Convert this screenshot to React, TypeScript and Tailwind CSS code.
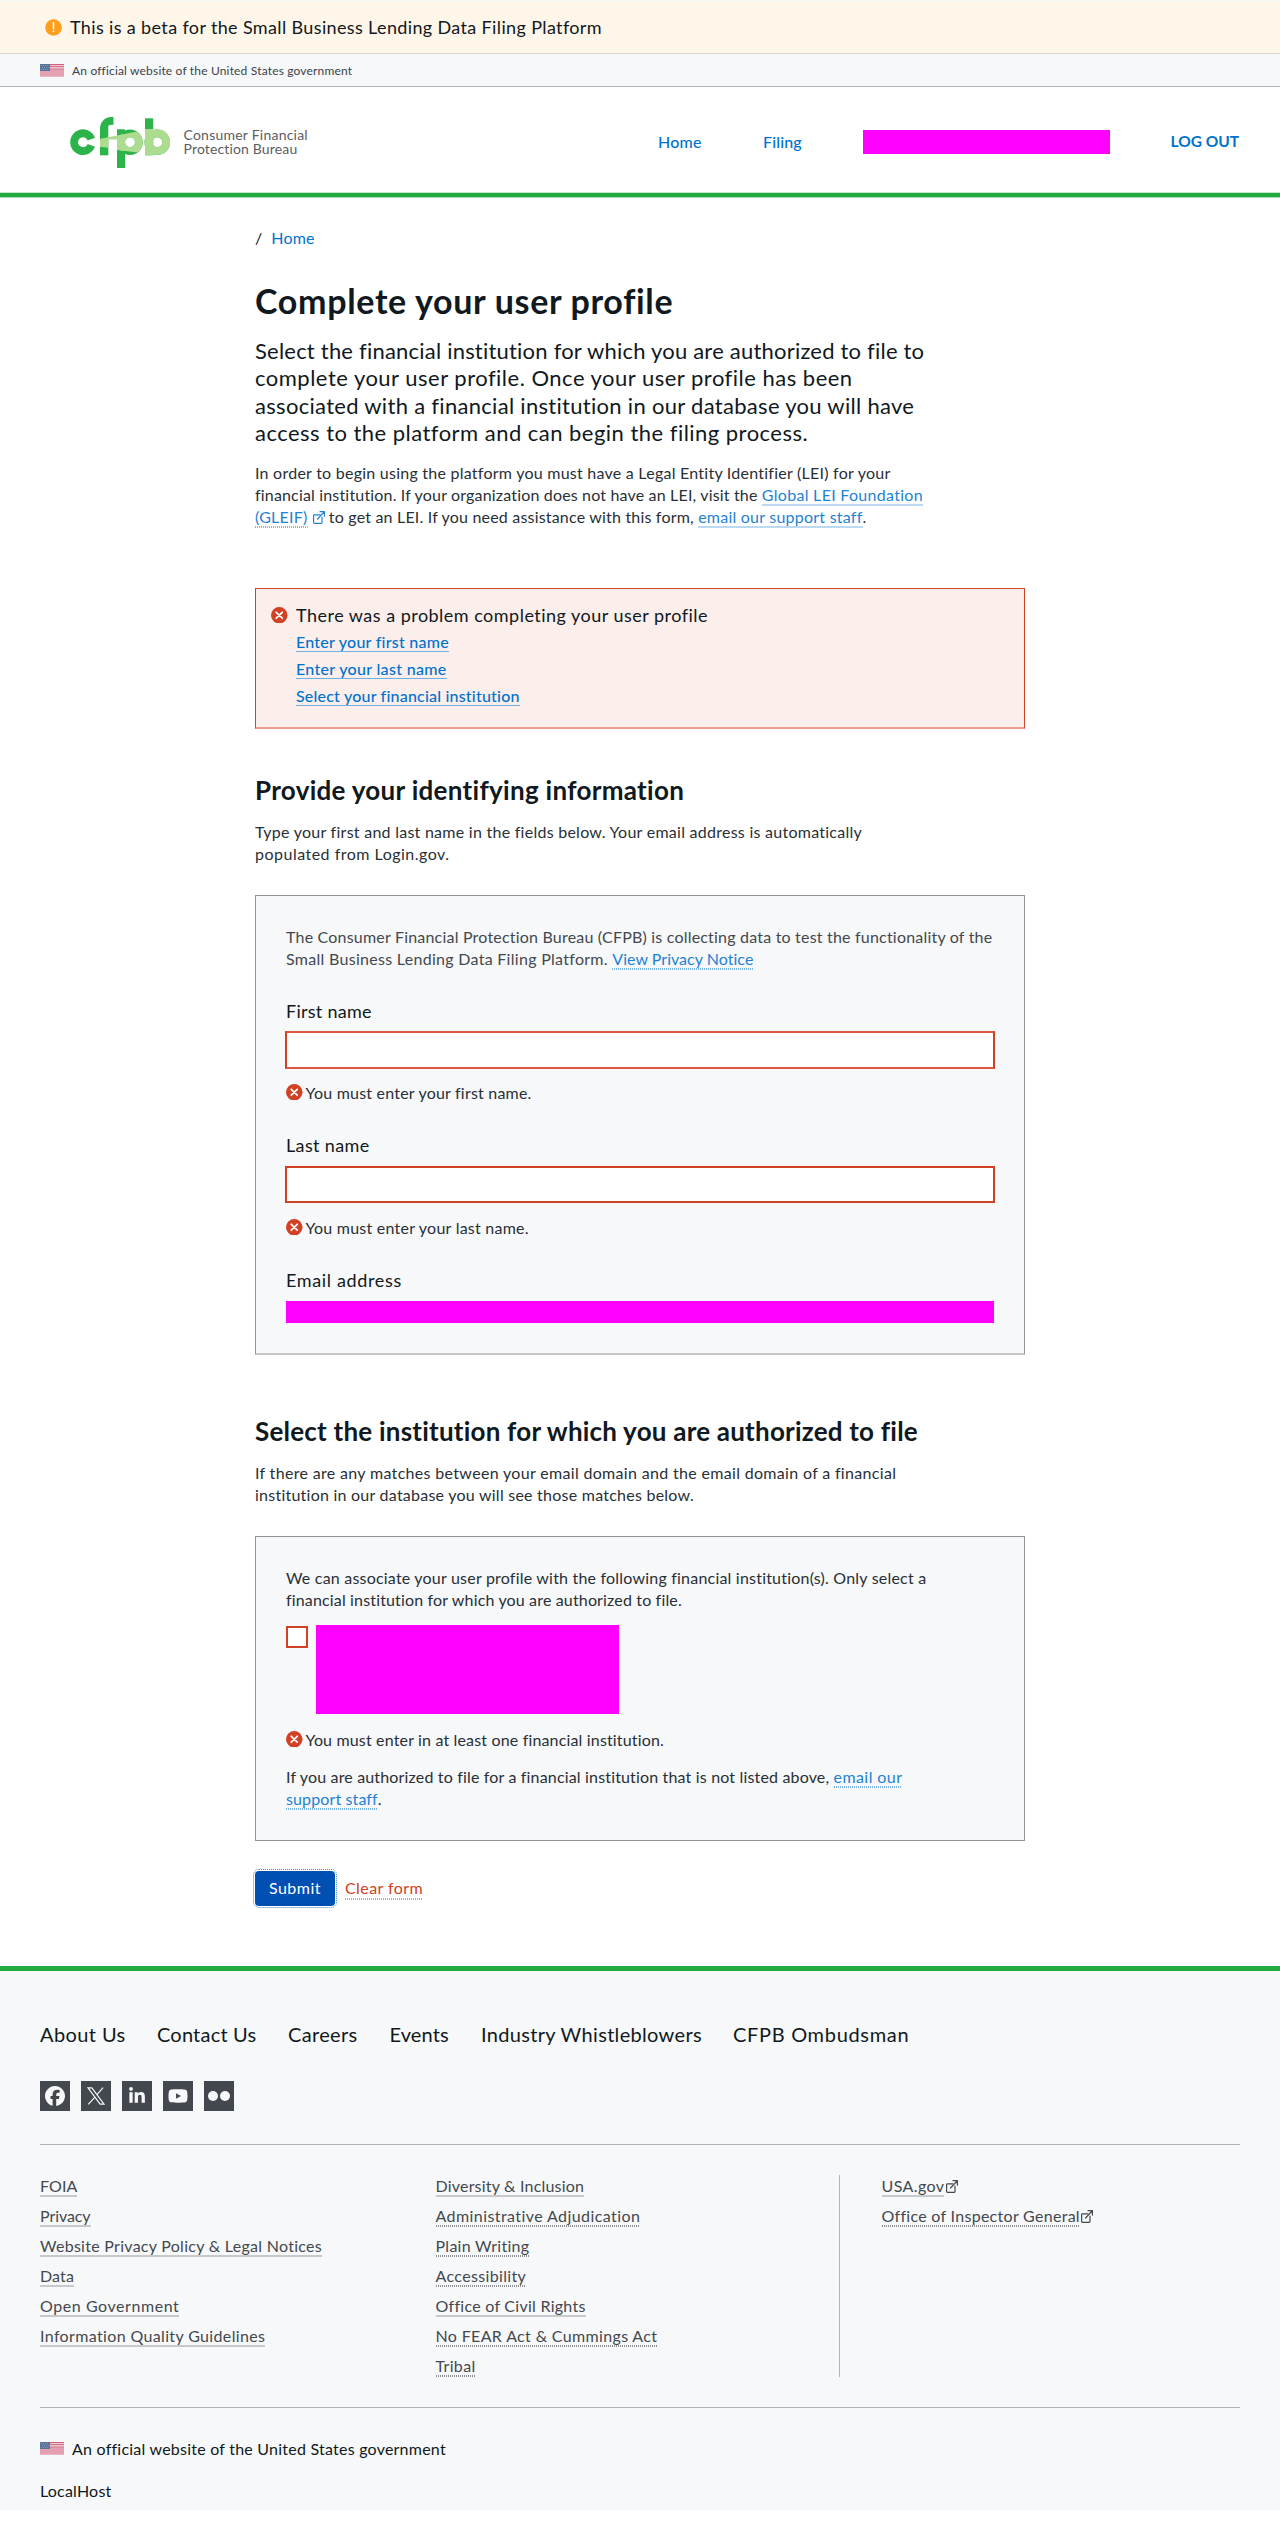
import type { ReactNode } from "react";
import { FaFacebook, FaLinkedinIn, FaYoutube } from "react-icons/fa6";

function ErrorIcon({ className = "" }: { className?: string }) {
  return (
    <svg viewBox="0 0 16 16" className={`h-[16.5px] w-[16.5px] shrink-0 ${className}`}>
      <circle cx="8" cy="8" r="8" fill="#d14124" />
      <path d="M5.1 5.1l5.8 5.8M10.9 5.1l-5.8 5.8" stroke="#fff" strokeWidth="1.7" strokeLinecap="round" />
    </svg>
  );
}

function ExternalIcon({ className = "" }: { className?: string }) {
  return (
    <svg viewBox="0 0 12 13" className={`inline-block h-[13px] w-3 -translate-y-px ${className}`} fill="none" stroke="currentColor" strokeWidth="1.2" strokeLinecap="round" strokeLinejoin="round">
      <path d="M7 3.8H1.4a.8.8 0 0 0-.8.8v7a.8.8 0 0 0 .8.8h6.8a.8.8 0 0 0 .8-.8V6" />
      <path d="M7 .7h4.4v4.4M11.2.9L4.6 8" />
    </svg>
  );
}

function Flag() {
  return (
    <svg viewBox="0 0 24 13" className="h-[13px] w-6 shrink-0" shapeRendering="crispEdges">
      <rect width="24" height="13" fill="#e3a0b1" />
      <rect width="24" height="1" fill="#cf5f7d" />
      <rect y="2" width="24" height="1" fill="#d46f8a" />
      <rect y="1" width="24" height="1" fill="#edc9d2" />
      <rect y="3" width="24" height="1" fill="#ecc2cd" />
      <rect y="5" width="24" height="1" fill="#dc8fa4" />
      <rect y="12" width="24" height="1" fill="#e8b4c1" />
      <rect width="10" height="7" fill="#5a7499" />
      <path d="M1 1.5h8M2 3.5h7M1 5.5h8" stroke="#7f97b5" strokeWidth="1" strokeDasharray="1 1" />
    </svg>
  );
}

function LogoShapes({ band = false }: { band?: boolean }) {
  const color = band ? "#addc91" : "#2cb34a";
  return (
    <g stroke={color} fill="none" strokeWidth="7.8">
      <rect x="34" y="15" width="8.3" height="28.3" fill={color} stroke="none" />
      <rect x="42" y="20.5" width="9.5" height="7" fill={band ? color : "none"} stroke="none" />
      <circle cx="45.3" cy="16.2" r="7.3" strokeDasharray="11.5 100" transform="rotate(180 45.3 16.2)" />
      <rect x="45" y="5" width="2.5" height="7.8" fill={color} stroke="none" />
      <rect x="51" y="17.3" width="8" height="38.7" fill={color} stroke="none" />
      <circle cx="64" cy="30.2" r="8.9" />
      <rect x="79" y="6.3" width="8.2" height="37" fill={color} stroke="none" />
      <circle cx="91.3" cy="30.2" r="8.9" />
    </g>
  );
}

function Logo() {
  return (
    <svg viewBox="0 0 112 60" className="h-[60px] w-[112px] shrink-0" role="img" aria-label="cfpb">
      <defs>
        <clipPath id="band">
          <polygon points="32,27.2 51,23.5 71,19.5 78,17 112,17 112,44 76,44 74,40.7 51,38 51,36.5 32,34.8" />
        </clipPath>
      </defs>
      <circle cx="17" cy="30.2" r="8.9" fill="none" stroke="#2cb34a" strokeWidth="7.8" strokeDasharray="49.2 100" transform="rotate(21 17 30.2)" />
      <LogoShapes />
      <g clipPath="url(#band)">
        <LogoShapes band />
      </g>
    </svg>
  );
}

function SolidLink({ children, className = "" }: { children: ReactNode; className?: string }) {
  return <a href="#" className={`border-b-2 border-[#bcd9f1] text-[#1f82d3] ${className}`}>{children}</a>;
}

function DottedLink({ children, className = "" }: { children: ReactNode; className?: string }) {
  return (
    <a href="#" className={`bg-[repeating-linear-gradient(90deg,#7fb8e6_0_1px,transparent_1px_2px)] bg-[length:100%_2px] bg-bottom bg-no-repeat pb-[2px] text-[#1f82d3] ${className}`}>
      {children}
    </a>
  );
}

function FieldError({ children, className = "" }: { children: string; className?: string }) {
  return (
    <div className={`flex h-[22px] gap-[3px] leading-[22px] ${className}`}>
      <ErrorIcon className="mt-[2px]" />
      <span>{children}</span>
    </div>
  );
}

function Social({ children }: { children: ReactNode }) {
  return <a href="#" className="flex h-[30px] w-[30px] items-center justify-center bg-[#43484e] text-[#f7f8f9]">{children}</a>;
}

function FooterLink({ children, dotted = false, className = "" }: { children: string; dotted?: boolean; className?: string }) {
  const line = dotted
    ? "bg-[repeating-linear-gradient(90deg,#8e9093_0_1px,transparent_1px_2px)] bg-[length:100%_2px] bg-bottom bg-no-repeat pb-[2px]"
    : "border-b-2 border-[#c8c9cb]";
  return <a href="#" className={`${line} ${className}`}>{children}</a>;
}

export default function App() {
  return (
    <div className="min-h-[2521px] w-[1280px] bg-white font-['Lato','Open_Sans',sans-serif] text-[16px] whitespace-nowrap text-[#101820]">
      <div className="h-px bg-[#f7f8f9]" />
      <div className="flex h-[53px] items-center border-b border-[#dbd8d2] bg-[#fff6ea] pl-[45px] text-[18px] leading-6">
        <svg viewBox="0 0 17 17" className="h-[17px] w-[17px]">
          <circle cx="8.5" cy="8.5" r="8.3" fill="#ff9e1b" />
          <path d="M8.5 3.6v6.2" stroke="#fff" strokeWidth="1.5" strokeLinecap="round" />
          <circle cx="8.5" cy="12.6" r="1" fill="#fff" />
        </svg>
        <span className="ml-2 tracking-[0.36px]">This is a beta for the Small Business Lending Data Filing Platform</span>
      </div>
      <div className="flex h-[33px] items-center border-b border-[#b4b5b6] bg-[#f7f8f9] pl-10 text-[12px]">
        <Flag />
        <span className="mt-px ml-2 tracking-[0.17px] text-[#3b4249]">An official website of the United States government</span>
      </div>

      <header className="flex h-[105px] items-center bg-white pt-[5px] pl-[66px] font-medium text-[#0072ce]">
        <Logo />
        <div className="ml-[5.5px] w-[474.5px] text-[14px] leading-[14px] font-normal text-[#5a5d61]">
          <div className="tracking-[0.23px]">Consumer Financial</div>
          <div className="tracking-[0.15px]">Protection Bureau</div>
        </div>
        <a href="#" className="w-[105px] tracking-[0.2px]">Home</a>
        <a href="#" className="w-[100px] tracking-[0.15px]">Filing</a>
        <div className="h-6 w-[247px] bg-[#ff00ff]" />
        <a href="#" className="-mt-px ml-[60.5px] text-[15.5px] font-bold tracking-[0.02px]">LOG OUT</a>
      </header>
      <div className="h-px bg-[#c3e8cb]" />
      <div className="h-1 bg-[#20aa3f]" />
      <div className="h-px bg-[#a5dcb2]" />

      <main className="ml-[255px] w-[770px]">
        <div className="mt-[29px] flex h-[22px] gap-[9px] leading-[22px]">
          <span>/</span>
          <a href="#" className="tracking-[0.2px] text-[#0072ce]">Home</a>
        </div>
        <h1 className="mt-[31px] text-[34px] leading-[42px] font-bold tracking-[0.67px]">Complete your user profile</h1>
        <p className="mt-[15px] text-[22px] leading-[27.4px]">
          <span className="block tracking-[0.21px]">Select the financial institution for which you are authorized to file to</span>
          <span className="block tracking-[0.49px]">complete your user profile. Once your user profile has been</span>
          <span className="block tracking-[0.3px]">associated with a financial institution in our database you will have</span>
          <span className="block tracking-[0.47px]">access to the platform and can begin the filing process.</span>
        </p>
        <p className="mt-[15px] leading-[22px] text-[#282f36]">
          <span className="block tracking-[0.245px]">In order to begin using the platform you must have a Legal Entity Identifier (LEI) for your</span>
          <span className="block">
            <span className="tracking-[0.17px]">financial institution. If your organization does not have an LEI, visit the </span>
            <SolidLink className="tracking-[0.29px]">Global LEI Foundation</SolidLink>
          </span>
          <span className="block">
            <DottedLink className="tracking-[0.24px]">(GLEIF)</DottedLink>
            <ExternalIcon className="ml-[5px] text-[#1f82d3]" />
            <span className="tracking-[0.19px]"> to get an LEI. If you need assistance with this form, </span>
            <SolidLink className="tracking-[0.23px]">email our support staff</SolidLink>.
          </span>
        </p>

        <section className="mt-[60px] flex h-[141px] gap-[8.5px] border border-b-2 border-[#d14124] border-b-[#e99c8c] bg-[#fbeeeb] pt-[15px] pl-[15px] font-medium">
          <ErrorIcon className="mt-[3px]" />
          <div>
            <h4 className="text-[18px] leading-[22px] font-normal tracking-[0.48px]">There was a problem completing your user profile</h4>
            <ul className="mt-[2px] leading-[27px] text-[#0072ce]">
              <li><a href="#" className="border-b border-[#72b0e2] tracking-[0.25px]">Enter your first name</a></li>
              <li><a href="#" className="border-b border-[#72b0e2] tracking-[0.32px]">Enter your last name</a></li>
              <li><a href="#" className="border-b border-[#72b0e2] tracking-[0.2px]">Select your financial institution</a></li>
            </ul>
          </div>
        </section>

        <h2 className="mt-[45px] text-[26px] leading-8 font-bold tracking-[0.3px]">Provide your identifying information</h2>
        <p className="mt-[15px] leading-[22px] text-[#282f36]">
          <span className="block tracking-[0.26px]">Type your first and last name in the fields below. Your email address is automatically</span>
          <span className="block tracking-[0.49px]">populated from Login.gov.</span>
        </p>

        <section className="mt-[30px] h-[460px] border border-b-2 border-[#919395] border-b-[#c4c6c8] bg-[#f7f8f9] pt-[30px] pr-[30px] pl-[30px]">
          <p className="leading-[22px] text-[#43484e]">
            <span className="block tracking-[0.2px]">The Consumer Financial Protection Bureau (CFPB) is collecting data to test the functionality of the</span>
            <span className="block">
              <span className="tracking-[0.29px]">Small Business Lending Data Filing Platform. </span>
              <DottedLink className="tracking-[0.03px]">View Privacy Notice</DottedLink>
            </span>
          </p>
          <label className="mt-[30px] block text-[18px] leading-[22px] tracking-[0.26px]">First name</label>
          <div className="mt-[9px] -ml-px h-[38px] w-[710px] border-2 border-[#d9593f] border-x-[#d14124] bg-white" />
          <FieldError className="mt-[13px] tracking-[0.21px] text-[#282f36]">You must enter your first name.</FieldError>
          <label className="mt-[30px] block text-[18px] leading-[22px] tracking-[0.35px]">Last name</label>
          <div className="mt-[10px] -ml-px h-[37px] w-[710px] border-2 border-[#d14124] bg-white" />
          <FieldError className="mt-[14px] tracking-[0.24px] text-[#282f36]">You must enter your last name.</FieldError>
          <label className="mt-[30px] block text-[18px] leading-[22px] tracking-[0.65px]">Email address</label>
          <div className="mt-[10px] h-[22px] w-[708px] bg-[#ff00ff]" />
        </section>

        <h2 className="mt-[60px] text-[26px] leading-8 font-bold tracking-[0.22px]">Select the institution for which you are authorized to file</h2>
        <p className="mt-[15px] leading-[22px] text-[#282f36]">
          <span className="block tracking-[0.325px]">If there are any matches between your email domain and the email domain of a financial</span>
          <span className="block tracking-[0.24px]">institution in our database you will see those matches below.</span>
        </p>

        <section className="mt-[30px] h-[305px] border border-[#919395] bg-[#f7f8f9] pt-[30px] pl-[30px] leading-[22px] text-[#282f36]">
          <p>
            <span className="block tracking-[0.205px]">We can associate your user profile with the following financial institution(s). Only select a</span>
            <span className="block tracking-[0.155px]">financial institution for which you are authorized to file.</span>
          </p>
          <div className="mt-[14px] flex items-start gap-2">
            <div className="mt-px h-[22px] w-[22px] border-2 border-[#d14124] bg-white" />
            <div className="h-[89px] w-[303px] bg-[#ff00ff]" />
          </div>
          <FieldError className="mt-[15px] tracking-[0.16px]">You must enter in at least one financial institution.</FieldError>
          <p className="mt-[15px]">
            <span className="block">
              <span className="tracking-[0.165px]">If you are authorized to file for a financial institution that is not listed above, </span>
              <DottedLink className="tracking-[0.43px]">email our</DottedLink>
            </span>
            <span className="block"><DottedLink className="tracking-[0.12px]">support staff</DottedLink>.</span>
          </p>
        </section>

        <div className="mt-[30px] flex h-[35px] items-center gap-[10px] font-medium">
          <button className="h-[35px] w-20 rounded-[4px] bg-[#0050b4] font-normal tracking-[0.5px] text-white outline-1 outline-offset-1 outline-[#3b8ad2] outline-dotted">Submit</button>
          <a href="#" className="bg-[repeating-linear-gradient(90deg,#e39a8b_0_1px,transparent_1px_2px)] bg-[length:100%_2px] bg-bottom bg-no-repeat pb-[1px] leading-[22px] font-normal tracking-[0.42px] text-[#d14124]">Clear form</a>
        </div>
      </main>

      <footer className="mt-[60px] h-[544px] border-t-[5px] border-[#20aa3f] bg-[#f7f8f9] px-10 text-[#43484e]">
        <nav className="mt-[51px] flex h-6 text-[20px] leading-6 text-[#101820]">
          <a href="#" className="w-[117px] tracking-[0.4px]">About Us</a>
          <a href="#" className="w-[131px] tracking-[0.2px]">Contact Us</a>
          <a href="#" className="w-[101.5px] tracking-[0.33px]">Careers</a>
          <a href="#" className="w-[91.5px] tracking-[0.12px]">Events</a>
          <a href="#" className="w-[252px] tracking-[0.32px]">Industry Whistleblowers</a>
          <a href="#" className="tracking-[0.68px]">CFPB Ombudsman</a>
        </nav>
        <div className="mt-[35px] flex h-[30px] gap-[11px]">
          <Social><FaFacebook size={20} /></Social>
          <Social>
            <svg viewBox="0 0 17 17" className="h-[18px] w-[18px]" fill="none" stroke="currentColor">
              <path d="M.9.8h3.7l11.5 15.4h-3.7z" strokeWidth="1.1" />
              <path d="M15.2.6L9.4 7.1M7.3 9.7L1.2 16.4" strokeWidth="1.1" />
            </svg>
          </Social>
          <Social><FaLinkedinIn size={18} /></Social>
          <Social><FaYoutube size={20} /></Social>
          <Social>
            <svg viewBox="0 0 22 10" className="h-[10px] w-[22px]" fill="currentColor">
              <circle cx="5" cy="5" r="5" />
              <circle cx="17" cy="5" r="5" />
            </svg>
          </Social>
        </div>
        <div className="mt-[33px] h-px bg-[#b4b5b6]" />
        <div className="mt-[30px] flex h-[202px] leading-[30px]">
          <ul className="-mt-1 w-[395.5px]">
            <li><FooterLink className="tracking-[0.1px]">FOIA</FooterLink></li>
            <li><FooterLink className="tracking-[-0.07px]">Privacy</FooterLink></li>
            <li><FooterLink className="tracking-[0.28px]">Website Privacy Policy &amp; Legal Notices</FooterLink></li>
            <li><FooterLink className="tracking-[0.14px]">Data</FooterLink></li>
            <li><FooterLink className="tracking-[0.56px]">Open Government</FooterLink></li>
            <li><FooterLink className="tracking-[0.36px]">Information Quality Guidelines</FooterLink></li>
          </ul>
          <ul className="-mt-1 w-[403.5px]">
            <li><FooterLink className="tracking-[0.2px]">Diversity &amp; Inclusion</FooterLink></li>
            <li><FooterLink dotted className="tracking-[0.42px]">Administrative Adjudication</FooterLink></li>
            <li><FooterLink dotted className="tracking-[0.27px]">Plain Writing</FooterLink></li>
            <li><FooterLink dotted className="tracking-[0.35px]">Accessibility</FooterLink></li>
            <li><FooterLink className="tracking-[0.27px]">Office of Civil Rights</FooterLink></li>
            <li><FooterLink dotted className="tracking-[0.35px]">No FEAR Act &amp; Cummings Act</FooterLink></li>
            <li><FooterLink dotted className="tracking-[0.34px]">Tribal</FooterLink></li>
          </ul>
          <div className="h-[202px] border-l border-[#b4b5b6] pl-[41.5px]">
            <ul className="-mt-1">
              <li><FooterLink className="tracking-[0.4px]">USA.gov</FooterLink><ExternalIcon className="ml-[1.5px]" /></li>
              <li><FooterLink dotted className="tracking-[0.29px]">Office of Inspector General</FooterLink><ExternalIcon className="ml-[1px]" /></li>
            </ul>
          </div>
        </div>
        <div className="mt-[30px] h-px bg-[#b4b5b6]" />
        <div className="mt-[30px] flex h-[22px] gap-2 leading-[22px] text-[#101820]">
          <span className="mt-1 h-[13px]"><Flag /></span>
          <span className="tracking-[0.23px]">An official website of the United States government</span>
        </div>
        <div className="mt-5 leading-[22px] tracking-[0.2px] text-[#101820]">LocalHost</div>
      </footer>
    </div>
  );
}
